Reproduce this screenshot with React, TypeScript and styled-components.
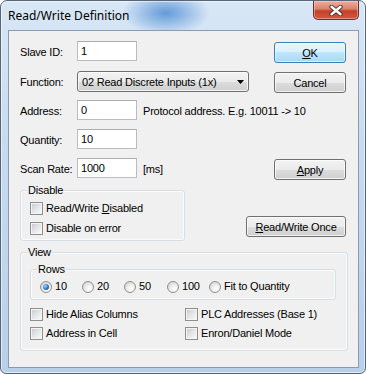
import React from "react";
import styled, { createGlobalStyle } from "styled-components";

const GlobalStyle = createGlobalStyle`
  * { box-sizing: border-box; }
  html, body { margin: 0; padding: 0; background: #ffffff; }
  body {
    font-family: "Liberation Sans", Arial, sans-serif;
    font-size: 11px;
    color: #000;
    letter-spacing: -0.2px;
  }
`;

const Window = styled.div`
  width: 366px;
  height: 374px;
  border: 1px solid #56657a;
  border-radius: 7px 7px 6px 6px;
  background:
    radial-gradient(ellipse 44px 22px at 165px 12px, rgba(70, 135, 210, 0.8), rgba(70, 135, 210, 0)),
    linear-gradient(180deg, #d8e7f6 0%, #c6dbef 40%, #b8d0ea 100%);
  box-shadow: inset 0 0 0 1px rgba(255, 255, 255, 0.55);
  display: flex;
  flex-direction: column;
  overflow: hidden;
`;

const TitleBar = styled.div`
  height: 29px;
  flex-shrink: 0;
  display: flex;
  align-items: flex-start;
`;

const Title = styled.div`
  font-family: "Noto Sans", "Open Sans", sans-serif;
  font-size: 12px;
  letter-spacing: 0;
  line-height: 16px;
  padding: 7px 0 0 7px;
`;

const CloseButton = styled.div`
  margin-left: auto;
  margin-right: 6px;
  width: 46px;
  height: 19px;
  border: 1px solid #6b2d27;
  border-top: none;
  border-radius: 0 0 5px 5px;
  background: linear-gradient(180deg, #eab0a0 0%, #dc7e68 45%, #c4402a 55%, #d2583e 100%);
  box-shadow: inset 0 0 0 1px rgba(255, 220, 210, 0.45);
  display: flex;
  align-items: center;
  justify-content: center;
`;

const Client = styled.div`
  height: 338px;
  flex-shrink: 0;
  margin: 0 6px 0 7px;
  background: #f0f0f0;
  border: 1px solid #8a9bb0;
  padding: 10px 10px 0 11px;
  display: flex;
  flex-direction: column;
`;

const Form = styled.div`
  display: flex;
  flex-direction: column;
  gap: 8px;
  padding-right: 2px;
`;

const Row = styled.div`
  display: flex;
  align-items: flex-start;
  height: 21px;
  &:first-child { margin-bottom: 1px; }
`;

const Label = styled.span`
  width: 57px;
  padding-top: 5px;
  line-height: 13px;
  white-space: nowrap;
`;

const Hint = styled.span`
  margin-left: 6px;
  padding-top: 5px;
  line-height: 13px;
  white-space: nowrap;
`;

const TextBox = styled.input`
  width: 60px;
  height: 20px;
  margin: 0;
  padding: 0 0 0 3px;
  font: inherit;
  letter-spacing: -0.2px;
  color: #000;
  background: #fff;
  border: 1px solid #b9bcc3;
  border-top-color: #abadb3;
  outline: none;
`;

const Combo = styled.div`
  width: 172px;
  height: 21px;
  display: flex;
  align-items: center;
  padding: 0 4px 0 4px;
  border: 1px solid #707070;
  border-radius: 3px;
  background: linear-gradient(180deg, #f2f2f2 0%, #ebebeb 50%, #dddddd 50%, #cfcfcf 100%);
  box-shadow: inset 0 0 0 1px rgba(255, 255, 255, 0.7);
`;

const ComboText = styled.span`
  flex: 1;
  white-space: nowrap;
`;

const PushButton = styled.button<{ $default?: boolean; $width?: number }>`
  width: ${(p) => p.$width ?? 72}px;
  height: 21px;
  margin: 1px 0 0 auto;
  padding: 0;
  font: inherit;
  letter-spacing: -0.2px;
  color: #000;
  border: 1px solid ${(p) => (p.$default ? "#3c7fb1" : "#707070")};
  border-radius: 3px;
  background: ${(p) =>
    p.$default
      ? "linear-gradient(180deg, #eaf6fd 0%, #d9f0fc 50%, #bee6fd 50%, #a7d9f5 100%)"
      : "linear-gradient(180deg, #f2f2f2 0%, #ebebeb 50%, #dddddd 50%, #cfcfcf 100%)"};
  box-shadow: inset 0 0 0 1px ${(p) => (p.$default ? "rgba(255,255,255,0.55)" : "rgba(255,255,255,0.7)")};
`;

const DisableRow = styled.div`
  display: flex;
  justify-content: space-between;
  align-items: flex-end;
  margin-top: 11px;
  padding-right: 2px;
`;

const OnceButton = styled(PushButton)`
  margin: 0 0 4px 0;
`;

const GroupBox = styled.div<{ $width?: number }>`
  ${(p) => (p.$width ? `width: ${p.$width}px;` : "")}
  border: 1px solid #d5dfe5;
  border-radius: 3px;
  box-shadow: inset 0 0 0 1px #fafbfc;
  display: flex;
  flex-direction: column;
  align-items: flex-start;
`;

const DisableBox = styled(GroupBox)`
  padding: 0 8px 5px 9px;
`;

const ViewBox = styled(GroupBox)`
  margin-top: 11px;
  align-items: stretch;
  padding: 0 11px 10px 9px;
`;

const RowsBox = styled(GroupBox)`
  margin-top: 10px;
  align-items: stretch;
  padding: 0 0 6px 9px;
`;

const Caption = styled.span`
  margin: -7px 0 0 -3px;
  padding: 0 1px;
  line-height: 13px;
  background: #f0f0f0;
  align-self: flex-start;
  white-space: nowrap;
`;

const CheckRow = styled.label<{ $gap?: number }>`
  display: flex;
  align-items: center;
  gap: 3px;
  height: 13px;
  margin-top: ${(p) => p.$gap ?? 0}px;
  line-height: 13px;
  white-space: nowrap;
`;

const CheckBox = styled.span`
  width: 13px;
  height: 13px;
  flex-shrink: 0;
  border: 1px solid #8e8f8f;
  padding: 1px;
  background: #f4f4f4;
  &::after {
    content: "";
    display: block;
    width: 100%;
    height: 100%;
    background: linear-gradient(135deg, #c9cdd3 0%, #e3e5e8 50%, #f7f7f7 100%);
  }
`;

const RadioGrid = styled.div`
  margin-top: 4px;
  display: grid;
  grid-template-columns: 42px 42px 43px 42px auto;
  height: 13px;
`;

const RadioItem = styled.label`
  display: flex;
  align-items: center;
  gap: 3px;
  line-height: 13px;
  white-space: nowrap;
`;

const RadioCircle = styled.span<{ $checked?: boolean }>`
  width: 12px;
  height: 12px;
  flex-shrink: 0;
  border-radius: 50%;
  border: 1px solid #8e8f8f;
  background: radial-gradient(circle at 65% 70%, #ffffff 0%, #ececec 45%, #c9c9c9 100%);
  display: flex;
  align-items: center;
  justify-content: center;
  &::after {
    content: "";
    display: ${(p) => (p.$checked ? "block" : "none")};
    width: 6px;
    height: 6px;
    border-radius: 50%;
    background: radial-gradient(circle at 35% 35%, #9fd8ff 0%, #2a78c4 55%, #0d3f7c 100%);
  }
`;

const CheckGrid = styled.div`
  margin-top: 8px;
  display: grid;
  grid-template-columns: 155px auto;
  row-gap: 6px;
`;

const CloseGlyph = () => (
  <svg width="14" height="11" viewBox="0 0 14 11">
    <path d="M2.5 1.8 L11.5 9.2 M11.5 1.8 L2.5 9.2" stroke="#4a2a28" strokeWidth="4.2" strokeLinecap="round" fill="none" />
    <path d="M2.5 1.8 L11.5 9.2 M11.5 1.8 L2.5 9.2" stroke="#ffffff" strokeWidth="2.4" strokeLinecap="round" fill="none" />
  </svg>
);

const DropArrow = () => (
  <svg width="7" height="4" viewBox="0 0 7 4">
    <path d="M0 0 H7 L3.5 4 Z" fill="#000" />
  </svg>
);

const Check = ({ children, gap }: { children: React.ReactNode; gap?: number }) => (
  <CheckRow $gap={gap}>
    <CheckBox />
    <span>{children}</span>
  </CheckRow>
);

const Radio = ({ label, checked }: { label: string; checked?: boolean }) => (
  <RadioItem>
    <RadioCircle $checked={checked} />
    <span>{label}</span>
  </RadioItem>
);

export default function App() {
  return (
    <>
      <GlobalStyle />
      <Window>
        <TitleBar>
          <Title>Read/Write Definition</Title>
          <CloseButton>
            <CloseGlyph />
          </CloseButton>
        </TitleBar>
        <Client>
          <Form>
            <Row>
              <Label>Slave ID:</Label>
              <TextBox readOnly defaultValue="1" />
              <PushButton $default>
                <u>O</u>K
              </PushButton>
            </Row>
            <Row>
              <Label>Function:</Label>
              <Combo>
                <ComboText>02 Read Discrete Inputs (1x)</ComboText>
                <DropArrow />
              </Combo>
              <PushButton>Cancel</PushButton>
            </Row>
            <Row>
              <Label>Address:</Label>
              <TextBox readOnly defaultValue="0" />
              <Hint>Protocol address. E.g. 10011 -&gt; 10</Hint>
            </Row>
            <Row>
              <Label>Quantity:</Label>
              <TextBox readOnly defaultValue="10" />
            </Row>
            <Row>
              <Label>Scan Rate:</Label>
              <TextBox readOnly defaultValue="1000" />
              <Hint>[ms]</Hint>
              <PushButton>
                <u>A</u>pply
              </PushButton>
            </Row>
          </Form>
          <DisableRow>
            <DisableBox $width={165}>
              <Caption>Disable</Caption>
              <Check gap={5}>
                Read/Write <u>D</u>isabled
              </Check>
              <Check gap={7}>Disable on error</Check>
            </DisableBox>
            <OnceButton $width={100}>
              <u>R</u>ead/Write Once
            </OnceButton>
          </DisableRow>
          <ViewBox>
            <Caption>View</Caption>
            <RowsBox>
              <Caption>Rows</Caption>
              <RadioGrid>
                <Radio label="10" checked />
                <Radio label="20" />
                <Radio label="50" />
                <Radio label="100" />
                <Radio label="Fit to Quantity" />
              </RadioGrid>
            </RowsBox>
            <CheckGrid>
              <Check>Hide Alias Columns</Check>
              <Check>PLC Addresses (Base 1)</Check>
              <Check>Address in Cell</Check>
              <Check>Enron/Daniel Mode</Check>
            </CheckGrid>
          </ViewBox>
        </Client>
      </Window>
    </>
  );
}
